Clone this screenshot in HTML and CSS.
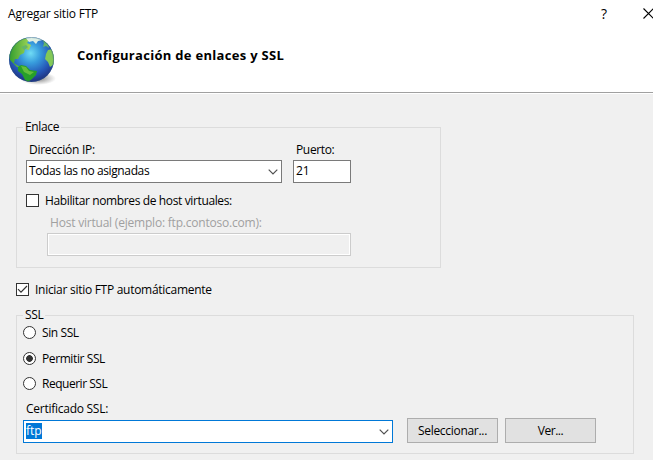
FILE: index.html
```
<!DOCTYPE html>
<html lang="es">
<head>
<meta charset="utf-8">
<title>Agregar sitio FTP</title>
<link rel="stylesheet" href="styles.css">
</head>
<body>
<header class="header">
  <div class="titlebar">
    <span class="caption">Agregar sitio FTP</span>
    <span class="help">?</span>
    <svg class="close" width="11" height="11" viewBox="0 0 11 11"><path d="M.5.5l10 10M10.5.5l-10 10"/></svg>
  </div>
  <div class="heading">
    <svg class="globe" width="48" height="50" viewBox="0 0 48 50">
      <defs>
        <radialGradient id="sea" cx=".48" cy=".36" r=".62"><stop offset="0" stop-color="#70dcf5"/><stop offset=".35" stop-color="#389ddd"/><stop offset=".75" stop-color="#2556b6"/><stop offset="1" stop-color="#203483"/></radialGradient>
        <radialGradient id="shade"><stop offset="0" stop-color="#555" stop-opacity=".8"/><stop offset="1" stop-color="#777" stop-opacity="0"/></radialGradient>
        <linearGradient id="land" x1="0" y1="0" x2="1" y2="0"><stop offset="0" stop-color="#2c9a2c"/><stop offset="1" stop-color="#a5d85a"/></linearGradient>
        <clipPath id="disc"><circle cx="23.5" cy="23.5" r="22.5"/></clipPath>
      </defs>
      <ellipse cx="30" cy="42.5" rx="18" ry="6.5" fill="url(#shade)"/>
      <circle cx="23.5" cy="23.5" r="22.5" fill="url(#sea)"/>
      <g clip-path="url(#disc)">
        <path fill="url(#land)" d="M2 24L0 13 9 5l8-3 4 2-2 3 4 2-2 5-4-1-1 4-4 2-2 4-3 0-1 4 3 2 3 2-3 0-4-4z"/>
        <path fill="#dcefe4" d="M17 1h15l3 3-5 1-2 3-3-3-4 1z"/>
        <path fill="#65b66a" d="M34 3l6 5 1 4-3-2-3 1 1-4zM13 11l5-2 2 2-4 3z"/>
        <path fill="#83c957" d="M38 18l2-4 5-1 3 10-3 6-3 2-2-5-3-3z"/>
        <path fill="#279f29" d="M10 31l3-2 5 1 4 4 7 1-1 4-4 4-4 3-3-2-3-6-4-3z"/>
        <path fill="#64bd3c" d="M13 30l5 1 3 4 5 1-4 3-6-3z"/>
      </g>
      <circle cx="23.5" cy="23.5" r="22" fill="none" stroke="#285582" stroke-opacity=".4"/>
    </svg>
    <h1 class="title">Configuración de enlaces y SSL</h1>
  </div>
</header>
<main class="content">
  <section class="group binding">
    <div class="legend"><span class="t-enlace">Enlace</span></div>
    <div class="fields">
      <label class="field address"><span class="label t-ip">Dirección IP:</span>
        <span class="box"><span class="t-todas">Todas las no asignadas</span><svg class="arrow" width="10" height="6" viewBox="0 0 10 6"><path d="M.7.7L5 5 9.3.7"/></svg></span></label>
      <label class="field port"><span class="label t-port">Puerto:</span><span class="box"><span class="t-21">21</span></span></label>
    </div>
    <div class="option virtual"><span class="check"></span><span class="t-hab">Habilitar nombres de host virtuales:</span></div>
    <div class="host"><span class="label t-host">Host virtual (ejemplo: ftp.contoso.com):</span><div class="box disabled"></div></div>
  </section>
  <div class="option auto"><span class="check"><svg width="11" height="11" viewBox="0 0 11 11"><path d="M1 5.2l3 3L10 2"/></svg></span><span class="t-auto">Iniciar sitio FTP automáticamente</span></div>
  <section class="group ssl">
    <div class="legend"><span class="t-ssl">SSL</span></div>
    <div class="radios">
      <div class="option"><span class="radio"></span><span class="t-sin">Sin SSL</span></div>
      <div class="option"><span class="radio selected"></span><span class="t-perm">Permitir SSL</span></div>
      <div class="option"><span class="radio"></span><span class="t-req">Requerir SSL</span></div>
    </div>
    <div class="certificate">
      <div class="field cert"><span class="label t-cert">Certificado SSL:</span>
        <div class="box focused"><span class="selection t-ftp">ftp</span><svg class="arrow" width="10" height="6" viewBox="0 0 10 6"><path d="M.7.7L5 5 9.3.7"/></svg></div></div>
      <div class="button"><span class="t-sel">Seleccionar...</span></div>
      <div class="button"><span class="t-ver">Ver...</span></div>
    </div>
  </section>
</main>
</body>
</html>
```
FILE: styles.css
```
* { box-sizing: border-box; }
body { margin: 0; width: 653px; height: 460px; overflow: hidden; background: #f0f0f0; color: #000; font: 12px/16px "Open Sans", "Noto Sans", sans-serif; white-space: nowrap; }
svg { display: block; flex: none; }
.header { height: 94px; background: #fff; border-bottom: 1px solid #fff; box-shadow: inset 0 -1px #a0a0a0; }
.titlebar { display: flex; align-items: center; height: 27px; padding-left: 8px; }
.caption { letter-spacing: -.19px; }
.help { margin-left: auto; margin-right: 36px; font-size: 14px; }
.close { margin-right: -1px; }
.close path { stroke: #000; stroke-width: 1.1; }
.heading { display: flex; padding-left: 8px; height: 64px; }
.globe { margin-top: 9px; }
.title { margin: 19px 0 0 21px; font-size: 13px; line-height: 18px; font-weight: 700; letter-spacing: .3px; }
.content { padding: 33px 0 0 16px; }
.group { border: 1px solid #dcdcdc; }
.legend { display: flex; height: 16px; margin-top: -9px; }
.legend span { margin-left: 6px; padding: 0 2px; background: #f0f0f0; }
.binding { width: 425px; height: 141px; padding-left: 9px; }
.binding .legend { margin-left: -9px; }
.fields { display: flex; gap: 11px; margin-top: 7px; }
.field { display: flex; flex-direction: column; }
.label { align-self: flex-start; margin-left: 3px; height: 18px; }
.address { width: 256px; }
.port { width: 58px; }
.box { display: flex; align-items: center; height: 23px; border: 1px solid #7a7a7a; background: #fff; padding: 0 3px 2px 2px; }
.arrow { margin: 3px 0 0 auto; }
.arrow path { fill: none; stroke: #505050; stroke-width: 1.2; }
.option { display: flex; align-items: center; gap: 6px; height: 16px; }
.virtual { margin-top: 10px; }
.check { width: 13px; height: 13px; border: 1px solid #333; background: #fff; margin-bottom: 1px; }
.check path { fill: none; stroke: #333; stroke-width: 1.2; }
.host { display: flex; flex-direction: column; width: 304px; margin: 6px 0 0 21px; color: #a0a0a0; }
.disabled { background: #f0f0f0; border-color: #ccc; box-shadow: inset 0 0 0 1px #fff; }
.auto { margin-top: 14px; }
.ssl { width: 618px; height: 139px; margin-top: 17px; padding-left: 6px; }
.ssl .legend { margin-left: -6px; }
.radios { display: flex; flex-direction: column; gap: 9.5px; margin-top: 2px; }
.radio { width: 13px; height: 13px; border: 1px solid #333; border-radius: 50%; background: #fff; margin-bottom: 1px; }
.selected { background: radial-gradient(circle, #333 0 3px, #fff 3.7px); }
.certificate { display: flex; align-items: flex-end; gap: 7px; margin-top: 9px; }
.cert { width: 370px; margin: 0 7px 0 0; }
.cert .label { height: 19px; }
.focused { border-color: #0078d7; }
.selection { background: #0078d7; color: #fff; }
.button { display: flex; align-items: center; justify-content: center; width: 91px; height: 25px; border: 1px solid #adadad; background: #e1e1e1; }
.t-enlace, .t-ssl, .t-port { letter-spacing: -.35px; }
.t-ip, .t-cert { letter-spacing: -.26px; }
.t-todas { letter-spacing: -.38px; }
.t-hab { letter-spacing: -.37px; }
.t-host { letter-spacing: -.21px; }
.t-auto { letter-spacing: -.28px; }
.t-sin, .t-perm { letter-spacing: -.4px; }
.t-req { letter-spacing: -.48px; }
.t-sel { letter-spacing: -.3px; }
.t-ver { letter-spacing: -.5px; }
```
